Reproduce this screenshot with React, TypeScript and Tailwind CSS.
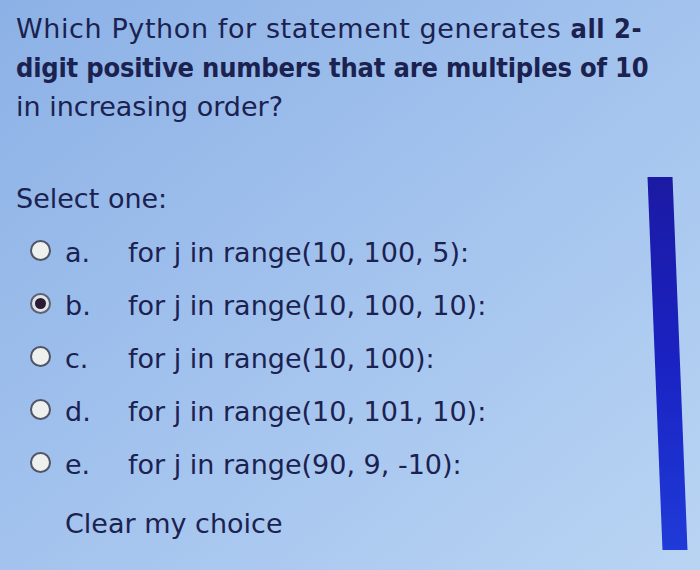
const options = [
  { letter: "a.", text: "for j in range(10, 100, 5):", checked: false },
  { letter: "b.", text: "for j in range(10, 100, 10):", checked: true },
  { letter: "c.", text: "for j in range(10, 100):", checked: false },
  { letter: "d.", text: "for j in range(10, 101, 10):", checked: false },
  { letter: "e.", text: "for j in range(90, 9, -10):", checked: false },
];

const Radio = ({ checked }: { checked: boolean }) => {
  if (checked) {
    return (
      <span className="flex h-[21px] w-[21px] items-center justify-center rounded-full border-2 border-[#5b6170] bg-[#dfe3ea]">
        <span className="h-[11px] w-[11px] rounded-full bg-[#2a1a33]" />
      </span>
    );
  }
  return <span className="block h-[21px] w-[21px] rounded-full border-2 border-[#4f5566] bg-[#eef0ee]" />;
};

export default function App() {
  return (
    <div className="h-[570px] w-[700px] overflow-hidden bg-gradient-to-br from-[#8cb1e6] via-[#a3c3ee] to-[#b9d4f3] font-['DejaVu_Sans',sans-serif] text-[27px] text-[#1b2250]">
      <div className="whitespace-nowrap px-4 pt-[9px] leading-[39px]">
        <p className="tracking-[0.6px]">
          Which Python for statement generates{" "}
          <b className="font-['DejaVu_Sans_Condensed','DejaVu_Sans',sans-serif] tracking-[0.5px]">all 2-</b>
        </p>
        <p className="font-['DejaVu_Sans_Condensed','DejaVu_Sans',sans-serif] font-bold tracking-[-0.2px]">
          digit positive numbers that are multiples of 10
        </p>
        <p>in increasing order?</p>
      </div>
      <div className="mt-[51px] flex pl-4 pr-[20px]">
        <div className="flex-1">
          <p className="mt-[2px] leading-[39px]">Select one:</p>
          <ul className="mt-[8px]">
            {options.map((o) => (
              <li key={o.letter} className="flex h-[53px] items-center leading-[53px]">
                <span className="ml-[14px] mt-[-4px]">
                  <Radio checked={o.checked} />
                </span>
                <span className="ml-[14px] w-[63px]">{o.letter}</span>
                <span>{o.text}</span>
              </li>
            ))}
          </ul>
          <p className="mt-[6px] pl-[49px] leading-[53px]">Clear my choice</p>
        </div>
        <div className="w-[25px] -skew-x-[-2.3deg] bg-gradient-to-b from-[#1b1aa3] via-[#1a22c2] to-[#1f3ad8]" />
      </div>
    </div>
  );
}
